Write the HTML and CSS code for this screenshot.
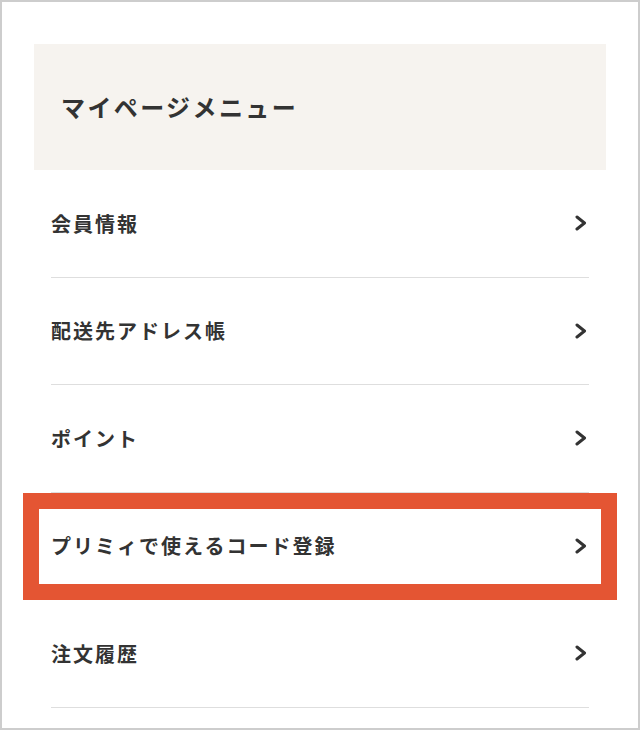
FILE: index.html
```html
<!DOCTYPE html>
<html lang="ja">
<head>
<meta charset="utf-8">
<title>マイページメニュー</title>
<link rel="stylesheet" href="styles.css">
</head>
<body>
<div class="frame">
  <div class="panel">
    <h2 class="panel-title">マイページメニュー</h2>
    <ul class="menu">
      <li class="menu-item"><span>会員情報</span><svg class="chev" viewBox="0 0 12 16"><polyline points="2,2 9.5,8 2,14"/></svg></li>
      <li class="menu-item"><span>配送先アドレス帳</span><svg class="chev" viewBox="0 0 12 16"><polyline points="2,2 9.5,8 2,14"/></svg></li>
      <li class="menu-item"><span>ポイント</span><svg class="chev" viewBox="0 0 12 16"><polyline points="2,2 9.5,8 2,14"/></svg></li>
      <li class="menu-item is-marked"><span>プリミィで使えるコード登録</span><svg class="chev" viewBox="0 0 12 16"><polyline points="2,2 9.5,8 2,14"/></svg></li>
      <li class="menu-item"><span>注文履歴</span><svg class="chev" viewBox="0 0 12 16"><polyline points="2,2 9.5,8 2,14"/></svg></li>
    </ul>
  </div>
</div>
</body>
</html>
```

FILE: styles.css
```css
* { box-sizing: border-box; }
html, body { margin: 0; padding: 0; background: #fff; }
body {
  font-family: "Noto Sans CJK JP", "Noto Sans", sans-serif;
  color: #333;
}
.frame {
  width: 640px;
  height: 730px;
  border: 2px solid #cdcdcd;
  overflow: hidden;
  padding: 42px 32px 0 32px;
}
.panel { position: relative; }
.panel-title {
  margin: 0;
  height: 126px;
  background: #f6f3ef;
  display: flex;
  align-items: center;
  padding: 0 0 2px 27px;
  font-size: 24px;
  font-weight: 700;
  letter-spacing: 2.4px;
}
.menu {
  list-style: none;
  margin: 0 17px;
  padding: 0;
}
.menu-item {
  position: relative;
  height: 107.5px;
  border-bottom: 1px solid #dedede;
  display: flex;
  align-items: center;
  justify-content: space-between;
  padding: 0 1px 0 0;
  font-size: 20px;
  font-weight: 700;
  letter-spacing: 2px;
}
.chev {
  width: 12px;
  height: 16px;
  fill: none;
  stroke: #333;
  stroke-width: 3;
  stroke-linecap: round;
  stroke-linejoin: round;
  margin-right: 1px;
}
.is-marked::after {
  content: "";
  position: absolute;
  left: -28px;
  right: -28px;
  top: 0;
  bottom: -1px;
  border: 16px solid #e45533;
}
```
